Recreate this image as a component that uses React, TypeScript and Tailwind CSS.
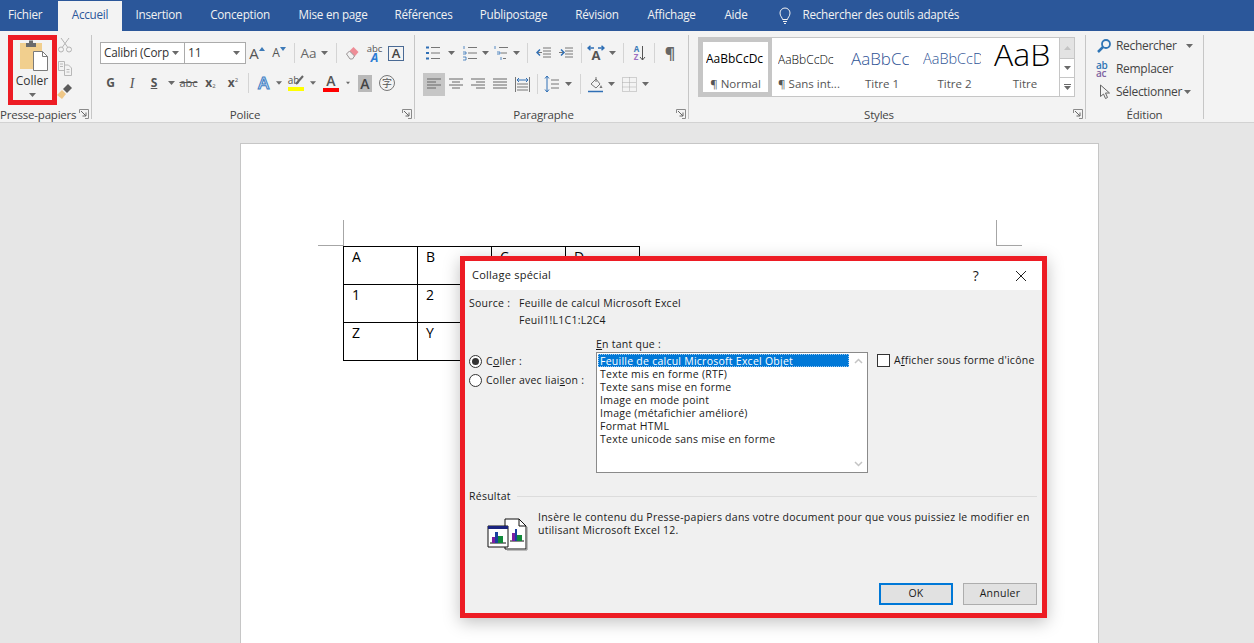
import type { ReactNode } from 'react';

const uiFont = { fontFamily: '"Open Sans", "Noto Sans", sans-serif' };

function Caret({ className = 'text-[#6a6a6a]' }: { className?: string }) {
  return (
    <svg width="7" height="4" viewBox="0 0 7 4" className={className}>
      <path d="M0 0h7L3.5 4z" fill="currentColor" />
    </svg>
  );
}

function Launcher() {
  return (
    <svg width="10" height="10" viewBox="0 0 10 10" className="absolute right-[2px] top-[1px]">
      <path d="M.5 4V.5H9.500V9.500H6" fill="none" stroke="#8a8a8a" />
      <path d="M2 2l5 5M7 3.500V7H3.500" fill="none" stroke="#666" />
    </svg>
  );
}

function VSep() {
  return <div className="h-[20px] w-px bg-[#d4d4d4]" />;
}

function Cell({ className, children }: { className: string; children?: ReactNode }) {
  return <div className={`flex h-[22px] shrink-0 items-center justify-center ${className}`}>{children}</div>;
}

function Lines({ kind }: { kind: 'left' | 'center' | 'right' | 'full' }) {
  const d = {
    left: 'M1 3h14M1 6h9M1 9h14M1 12h9',
    center: 'M1 3h14M4 6h8M1 9h14M4 12h8',
    right: 'M1 3h14M6 6h9M1 9h14M6 12h9',
    full: 'M1 3h14M1 6h14M1 9h14M1 12h14',
  }[kind];
  return (
    <svg width="16" height="16" viewBox="0 0 16 16">
      <path d={d} stroke="#666" fill="none" />
    </svg>
  );
}

function Group({ label, className, labelClass = '', launcher, children }: { label: string; className: string; labelClass?: string; launcher?: boolean; children: ReactNode }) {
  return (
    <div className={`flex h-[84px] shrink-0 flex-col border-r border-[#c6c6c6] ${className}`}>
      <div className="h-[73px] shrink-0">{children}</div>
      <div className={`relative h-[11px] text-center text-[11.5px] leading-[13px] tracking-[-0.2px] text-[#444] ${labelClass}`}>
        {label}
        {launcher && <Launcher />}
      </div>
    </div>
  );
}

const tabs: [string, string][] = [
  ['Insertion', 'w-[73.5px]'],
  ['Conception', 'w-[89px]'],
  ['Mise en page', 'w-[97px]'],
  ['Références', 'w-[84px]'],
  ['Publipostage', 'w-[96px]'],
  ['Révision', 'w-[71px]'],
  ['Affichage', 'w-[78px]'],
  ['Aide', 'w-[51px]'],
];

function TabBar() {
  return (
    <div className="flex h-[31px] items-end bg-[#2b579a] text-[11.7px] tracking-[-0.25px] text-[#f2f2f2]">
      <div className="flex h-[30px] w-[58px] items-center pl-2 pb-[2px]">Fichier</div>
      <div className="flex h-[30px] w-[64px] items-center justify-center bg-[#f3f3f3] pb-[2px] text-[#2b579a]">Accueil</div>
      {tabs.map(([name, width]) => (
        <div key={name} className={`flex h-[30px] items-center justify-center pb-[2px] ${width}`}>
          {name}
        </div>
      ))}
      <div className="ml-[15px] flex h-[30px] items-center pb-[2px]">
        <svg width="16" height="18" viewBox="0 0 16 18" fill="none" stroke="#f2f2f2">
          <path d="M5.500 13.500c0-2-2.500-3-2.500-6.500a5 5 0 0 1 10 0c0 3.500-2.500 4.500-2.500 6.500zM6 15.500h4M7 17.500h2" />
        </svg>
        <span className="ml-[10px]">Rechercher des outils adaptés</span>
      </div>
    </div>
  );
}

function ClipboardGroup() {
  return (
    <Group label="Presse-papiers" className="w-[92px]" labelClass="pr-[20px] whitespace-nowrap" launcher>
      <div className="flex pl-[11px] pt-[4px]">
        <div className="flex w-[42px] flex-col items-center">
          <svg width="30" height="33" viewBox="0 0 30 33" className="ml-[3px]">
            <path d="M1 4h22v26H1z" fill="#f1cf8e" />
            <path d="M7 8V4h3V1.500h4V4h3v4z" fill="#6b6b6b" />
            <path d="M14.500 12.500h9l5 5v14h-14z" fill="#fff" stroke="#7a7a7a" />
            <path d="M23.500 12.500v5h5" fill="none" stroke="#7a7a7a" />
          </svg>
          <span className="mt-[2px] text-[12px] leading-[14px] text-[#333]">Coller</span>
          <div className="mt-[5px]">
            <Caret />
          </div>
        </div>
        <div className="-mt-[2px] ml-[4px] flex flex-col items-center gap-[7px]">
          <svg width="16" height="16" viewBox="0 0 16 16" fill="none" stroke="#b3b3b3">
            <path d="M4 1l6.500 9M12 1L5.500 10" />
            <circle cx="4" cy="12.500" r="2.500" />
            <circle cx="12" cy="12.500" r="2.500" />
          </svg>
          <svg width="16" height="16" viewBox="0 0 16 16" fill="none" stroke="#b8b8b8">
            <path d="M1.500 1.500h6v9h-6zM3 4h3M3 6.500h3" />
            <path d="M7.500 5h4l3 3v7.500h-7zM9.500 9.500h3M9.500 12h3" fill="#f3f3f3" />
          </svg>
          <svg width="16" height="16" viewBox="0 0 16 16">
            <path d="M0 12l5-5 4 4-4 5z" fill="#efc787" />
            <path d="M6 6l5-5 4 4-5 5z" fill="#5c5c5c" />
          </svg>
        </div>
      </div>
    </Group>
  );
}

function FontGroup() {
  return (
    <Group label="Police" className="w-[323px]" labelClass="pr-[16px]" launcher>
      <div className="pt-[7px]">
        <div className="flex h-[22px] items-center pl-2">
          <div className="flex h-[22px] w-[85px] shrink-0 items-center justify-between whitespace-nowrap border border-[#ababab] bg-white pl-[3px] pr-[5px] text-[11.7px] tracking-[-0.2px] text-[#333]">
            Calibri (Corp
            <Caret />
          </div>
          <div className="-ml-px flex h-[22px] w-[62px] shrink-0 items-center justify-between border border-[#ababab] bg-white pl-[3px] pr-[5px] text-[12px] text-[#333]">
            11
            <Caret />
          </div>
          <Cell className="w-[22px] text-[15px] text-[#555]">
            A<svg width="6" height="4" viewBox="0 0 6 4" className="-mt-2"><path d="M0 4l3-4 3 4z" fill="#3d7ab8" /></svg>
          </Cell>
          <Cell className="w-[22px] text-[12px] text-[#555]">
            A<svg width="6" height="4" viewBox="0 0 6 4" className="-mt-2"><path d="M0 0h6L3 4z" fill="#3d7ab8" /></svg>
          </Cell>
          <Cell className="w-[8px]"><VSep /></Cell>
          <Cell className="w-[32px] gap-[4px] text-[13.500px] text-[#666]">
            Aa
            <Caret />
          </Cell>
          <Cell className="w-[12px]"><VSep /></Cell>
          <Cell className="w-[22px]">
            <svg width="16" height="16" viewBox="0 0 16 16">
              <path d="M1.500 9l7-7 5 5-6 7H5z" fill="#ee8d97" />
              <path d="M1.500 9l3-3 5 5-2 3H5z" fill="#f2f2f2" stroke="#999" />
            </svg>
          </Cell>
          <Cell className="w-[21px]">
            <div className="relative flex h-[18px] w-[18px] flex-col items-center leading-none">
              <span className="text-[9.500px] leading-[9px] text-[#555]">abc</span>
              <span className="text-[12px] font-bold italic leading-[10px] text-[#2b7cd3]">A</span>
            </div>
          </Cell>
          <Cell className="w-[22px]">
            <div className="flex h-[15px] w-[16px] items-center justify-center border border-[#4a6a94] text-[13px] font-semibold leading-none text-[#444]">A</div>
          </Cell>
        </div>
        <div className="mt-2 flex h-[22px] items-center pl-2 text-[#555]">
          <Cell className="w-[21px] text-[12px] font-bold">G</Cell>
          <Cell className="w-[22px] font-['Liberation_Serif',serif] text-[14px] italic">I</Cell>
          <Cell className="w-[22px] text-[12px] font-bold underline">S</Cell>
          <Cell className="w-[12px]"><Caret /></Cell>
          <Cell className="w-[23px] text-[11px] line-through">abc</Cell>
          <Cell className="w-[21px] text-[12px] font-bold">x<span className="mt-[6px] text-[6px] font-normal">2</span></Cell>
          <Cell className="w-[24px] text-[12px] font-bold">x<span className="-mt-[6px] text-[6px] font-normal">2</span></Cell>
          <Cell className="w-[6px]"><VSep /></Cell>
          <Cell className="w-[25px] text-[17px] font-semibold text-[#cfe2f6] [-webkit-text-stroke:1px_#3f7fc4]">A</Cell>
          <Cell className="w-[6px]"><Caret /></Cell>
          <Cell className="w-[28px]">
            <div className="relative flex flex-col items-center">
              <span className="-ml-[5px] text-[10px] leading-[11px] text-[#555]">ab</span>
              <svg width="9" height="10" viewBox="0 0 9 10" className="absolute right-[0px] top-0">
                <path d="M1 9l7-8" stroke="#666" strokeWidth="2" />
              </svg>
              <span className="mt-[1px] h-[4px] w-[16px] bg-[#ffff00]" />
            </div>
          </Cell>
          <Cell className="w-[6px]"><Caret /></Cell>
          <Cell className="w-[30px]">
            <div className="flex flex-col items-center">
              <span className="text-[14px] font-semibold leading-[14px] text-[#555]">A</span>
              <span className="h-[4px] w-[16px] bg-[#ff0000]" />
            </div>
          </Cell>
          <Cell className="w-[4px]"><Caret /></Cell>
          <Cell className="w-[30px]">
            <div className="flex h-[17px] w-[14px] items-center justify-center bg-[#b9b9b9] text-[14px] font-semibold text-[#444]">A</div>
          </Cell>
          <Cell className="w-[14px]">
            <div className="flex h-[16px] w-[16px] shrink-0 items-center justify-center rounded-full border border-[#777] font-['Noto_Sans_CJK_SC',sans-serif] text-[10px] leading-none">字</div>
          </Cell>
        </div>
      </div>
    </Group>
  );
}

function ListIcon({ kind }: { kind: 'bullet' | 'num' | 'multi' }) {
  return (
    <svg width="16" height="16" viewBox="0 0 16 16" fill="none" stroke="#777">
      <path d={kind === 'multi' ? 'M6 2.500h9M8 8h6M10 13.500h3' : 'M6 2.500h9M6 8h9M6 13.500h9'} />
      {kind === 'bullet' && <path d="M1 1.500h3v2H1zM1 7h3v2H1zM1 12.500h3v2H1z" fill="#2f6fb5" stroke="none" />}
      {kind === 'num' && <path d="M2 1v3M1 7h3v2H1M1 12h3v3H1" stroke="#2f6fb5" strokeWidth=".8" />}
      {kind === 'multi' && <path d="M2 1v3M4 7h3v2H4M8 12v3" stroke="#2f6fb5" strokeWidth=".8" />}
    </svg>
  );
}

function ParagraphGroup() {
  return (
    <Group label="Paragraphe" className="w-[274px]" labelClass="pr-[16px]" launcher>
      <div className="pt-[7px]">
        <div className="flex h-[22px] items-center pl-[8px]">
          <Cell className="w-[20px]"><ListIcon kind="bullet" /></Cell>
          <Cell className="w-[17px]"><Caret /></Cell>
          <Cell className="w-[20px]"><ListIcon kind="num" /></Cell>
          <Cell className="w-[10px]"><Caret /></Cell>
          <Cell className="w-[22px]"><ListIcon kind="multi" /></Cell>
          <Cell className="w-[8px]"><Caret /></Cell>
          <Cell className="w-[14px]"><VSep /></Cell>
          <Cell className="w-[20px]">
            <svg width="16" height="16" viewBox="0 0 16 16" fill="none" stroke="#777">
              <path d="M7 3h8M7 6h8M7 9h8M7 12h8M1 7.500h5" />
              <path d="M4 4.500L1 7.500l3 3" stroke="#2f6fb5" strokeWidth="1.500" />
            </svg>
          </Cell>
          <Cell className="w-[24px]">
            <svg width="16" height="16" viewBox="0 0 16 16" fill="none" stroke="#777">
              <path d="M7 3h8M7 6h8M7 9h8M7 12h8M1 7.500h5" />
              <path d="M3 4.500l3 3-3 3" stroke="#2f6fb5" strokeWidth="1.500" />
            </svg>
          </Cell>
          <Cell className="w-[6px]"><VSep /></Cell>
          <Cell className="w-[24px]">
            <div className="flex flex-col items-center">
              <svg width="18" height="6" viewBox="0 0 18 6" fill="none" stroke="#2f6fb5" strokeWidth="1.500">
                <path d="M7 3H1M3.500.8L1 3l2.500 2.200M11 3h6M14.500.8L17 3l-2.500 2.200" />
              </svg>
              <span className="-mt-[2px] text-[13px] font-bold leading-[12px] text-[#555]">A</span>
            </div>
          </Cell>
          <Cell className="w-[8px]"><Caret /></Cell>
          <Cell className="w-[14px]"><VSep /></Cell>
          <Cell className="w-[20px]">
            <div className="flex flex-col text-[8px] font-bold leading-[8px] text-[#3d7ab8]"><span>A</span><span className="text-[#9b6fc0]">Z</span></div>
            <svg width="7" height="16" viewBox="0 0 7 16" fill="none" stroke="#555"><path d="M3.500 1v14M1 12l2.500 3L6 12" /></svg>
          </Cell>
          <Cell className="w-[8px]"><VSep /></Cell>
          <Cell className="w-[24px] text-[16px] font-bold text-[#666]">¶</Cell>
        </div>
        <div className="mt-2 flex h-[24px] items-center pl-[8px]">
          <Cell className="h-[23px] w-[22px] bg-[#c6c6c6]"><Lines kind="left" /></Cell>
          <Cell className="w-[22px]"><Lines kind="center" /></Cell>
          <Cell className="w-[22px]"><Lines kind="right" /></Cell>
          <Cell className="w-[22px]"><Lines kind="full" /></Cell>
          <Cell className="w-[23px]">
            <svg width="17" height="17" viewBox="0 0 17 17" fill="none" stroke="#777">
              <path d="M1.500 1v15M15.500 1v15M3 8h11M3 11h11M3 14h11" />
              <path d="M3 4h11M5 2L3 4l2 2M12 2l2 2-2 2" stroke="#2f6fb5" />
            </svg>
          </Cell>
          <Cell className="w-[6px]"><VSep /></Cell>
          <Cell className="w-[24px]">
            <svg width="16" height="18" viewBox="0 0 16 18" fill="none" stroke="#777">
              <path d="M7 5h8M7 9h8M7 13h8" />
              <path d="M3 1v16M1 3.500L3 1l2 2.500M1 14.500L3 17l2-2.500" stroke="#2f6fb5" />
            </svg>
          </Cell>
          <Cell className="w-[8px]"><Caret /></Cell>
          <Cell className="w-[16px]"><VSep /></Cell>
          <Cell className="w-[14px]">
            <svg width="17" height="17" viewBox="0 0 17 17" fill="none" stroke="#777" className="shrink-0">
              <path d="M4 8l5-5 4 5-4 4z" />
              <path d="M9 1v5" />
              <path d="M14 9l1.500 3h-3z" fill="#777" stroke="none" />
              <path d="M1 15.500h15" stroke="#2f6fb5" strokeWidth="1.500" />
            </svg>
          </Cell>
          <Cell className="w-[18px]"><Caret /></Cell>
          <Cell className="w-[18px]">
            <svg width="15" height="15" viewBox="0 0 15 15" fill="none" stroke="#aaa" strokeDasharray="1 1" className="shrink-0">
              <path d="M.5.5h14v14H.5zM7.500.5v14M.5 5.500h14M.5 10h14" />
            </svg>
          </Cell>
          <Cell className="w-[14px]"><Caret /></Cell>
        </div>
      </div>
    </Group>
  );
}

const styleCells = [
  { sample: 'AaBbCcDc', label: '¶ Sans int...', cls: 'w-[74px]', text: 'w-[60px] ml-[6px] text-[12px] text-black pt-[13px]' },
  { sample: 'AaBbCcDc', label: 'Titre 1', cls: 'w-[72px]', text: 'w-[58px] ml-[5px] text-[17px] text-[#2f5496] pt-[12px]' },
  { sample: 'AaBbCcDd', label: 'Titre 2', cls: 'w-[73px]', text: 'w-[58px] ml-[5px] text-[14.5px] text-[#2f5496] pt-[12px]' },
];

function StylesGroup() {
  return (
    <Group label="Styles" className="w-[397px]" labelClass="pr-[16px]" launcher>
      <div className="flex pl-[9px] pt-[2px]">
        <div className="flex h-[60px] border border-[#c6c6c6] bg-white">
          <div className="flex w-[73px] flex-col border-[4px] border-[#c6c6c6]">
            <div className="ml-[3px] h-[34px] w-[59px] overflow-hidden whitespace-nowrap pt-[9px] text-[12px] leading-[16px] text-black">AaBbCcDc</div>
            <div className="text-center text-[11.500px] leading-[15px] text-[#555]">¶ Normal</div>
          </div>
          {styleCells.map(c => (
            <div key={c.label} className={`flex flex-col ${c.cls}`}>
              <div className={`h-[38px] overflow-hidden whitespace-nowrap font-light leading-[18px] ${c.text}`}>{c.sample}</div>
              <div className="text-center text-[11.500px] leading-[15px] text-[#555]">{c.label}</div>
            </div>
          ))}
          <div className="flex w-[68px] flex-col">
            <div className="h-[38px] pt-[7px]">
              <div className="h-[24px] overflow-hidden pl-[3px] text-[32px] font-light leading-[18px] text-black">AaB</div>
            </div>
            <div className="text-center text-[11.500px] leading-[15px] text-[#555]">Titre</div>
          </div>
        </div>
        <div className="flex h-[60px] w-[15px] flex-col border border-l-0 border-[#c6c6c6] bg-white">
          <div className="flex h-[21px] items-center justify-center border-b border-[#c6c6c6] bg-[#e3e3e3]"><Caret className="rotate-180 text-[#c4c4c4]" /></div>
          <div className="flex h-[19px] items-center justify-center border-b border-[#c6c6c6]"><Caret /></div>
          <div className="flex flex-1 flex-col items-center justify-center gap-[1px]">
            <span className="h-px w-[7px] bg-[#6a6a6a]" />
            <Caret />
          </div>
        </div>
      </div>
    </Group>
  );
}

function EditGroup() {
  return (
    <Group label="Édition" className="w-[118px]">
      <div className="-mt-px flex flex-col pl-[10px] text-[12px] leading-[23px] tracking-[-0.3px] text-[#444]">
        <div className="flex h-[23px] items-center">
          <svg width="16" height="16" viewBox="0 0 16 16" fill="none" stroke="#2f75b5" strokeWidth="1.800">
            <circle cx="10" cy="6" r="4" />
            <path d="M7 9l-5 5" strokeWidth="2.500" />
          </svg>
          <span className="ml-[4px]">Rechercher</span>
          <span className="ml-[9px]"><Caret /></span>
        </div>
        <div className="flex h-[23px] items-center">
          <div className="flex w-[16px] flex-col text-[10px] font-semibold leading-[8px]">
            <span className="text-[#2f75b5]">ab</span>
            <span className="text-[#8064a2]">ac</span>
          </div>
          <span className="ml-[4px]">Remplacer</span>
        </div>
        <div className="flex h-[23px] items-center">
          <svg width="16" height="16" viewBox="0 0 16 16" fill="#f3f3f3" stroke="#666">
            <path d="M4.500 1v11.500l3-2.500 2 4.500 2-1-2-4.500h4z" />
          </svg>
          <span className="ml-[4px]">Sélectionner</span>
          <span className="ml-[2px]"><Caret /></span>
        </div>
      </div>
    </Group>
  );
}

function CropMark({ side }: { side: 'left' | 'right' }) {
  return (
    <div className={`h-[26px] w-[26px] border-b border-[#a6a6a6] ${side === 'left' ? 'border-r' : 'border-l'}`} />
  );
}

const tableRows = [
  ['A', 'B', 'C', 'D'],
  ['1', '2', '', ''],
  ['Z', 'Y', '', ''],
];

function PageArea() {
  return (
    <div className="h-[520px] bg-[#e6e6e6] pl-[240px] pt-[20px]">
      <div className="h-[500px] w-[859px] border border-b-0 border-[#c6c6c6] bg-white pl-[77px] pt-[76px]">
        <div className="flex w-[704px] justify-between">
          <CropMark side="left" />
          <CropMark side="right" />
        </div>
        <table className="ml-[25px] w-[297px] table-fixed border-collapse text-[14px] text-black">
          <tbody>
            {tableRows.map(row => (
              <tr key={row[0]} className="h-[38px]">
                {row.map((c, i) => (
                  <td key={i} className="w-[74px] border border-black pl-[8px] align-top leading-[19px]">
                    {c}
                  </td>
                ))}
              </tr>
            ))}
          </tbody>
        </table>
      </div>
    </div>
  );
}

function Radio({ checked }: { checked?: boolean }) {
  return (
    <span className="flex h-[13px] w-[13px] shrink-0 items-center justify-center rounded-full border border-[#333] bg-white">
      {checked && <span className="h-[7px] w-[7px] rounded-full bg-[#333]" />}
    </span>
  );
}

const formats = [
  'Texte mis en forme (RTF)',
  'Texte sans mise en forme',
  'Image en mode point',
  'Image (métafichier amélioré)',
  'Format HTML',
  'Texte unicode sans mise en forme',
];

function ResultIcon() {
  return (
    <svg width="42" height="34" viewBox="0 0 42 34" className="mt-[6px] shrink-0">
      <path d="M18 2h14l7 7v23H18z" fill="#fff" stroke="#111" />
      <path d="M32 2v7h7" fill="none" stroke="#111" />
      <path d="M40 10v23H20" fill="none" stroke="#888" />
      <path d="M23 24h14" stroke="#111" />
      <path d="M25 16h3v8h-3z" fill="#7b1fa2" />
      <path d="M28 12h2v12h-2z" fill="#1a3fa0" />
      <path d="M30 18h5v6h-5z" fill="#118a3b" />
      <path d="M1 9h20v21H1z" fill="#fff" stroke="#111" />
      <path d="M1 9h20v3H1z" fill="#1a237e" />
      <path d="M3 26h16" stroke="#111" />
      <path d="M5 20h3v6H5z" fill="#7b1fa2" />
      <path d="M8 15h3v11H8z" fill="#1a3fa0" />
      <path d="M11 19h5v7h-5z" fill="#118a3b" />
    </svg>
  );
}

function PasteDialog() {
  return (
    <div className="absolute left-[460px] top-[256px] flex h-[362px] w-[587px] flex-col border-[5px] border-[#ed1c24] bg-[#f0f0f0] text-[10.500px] tracking-[0.25px] text-[#1a1a1a] shadow-[0_4px_16px_rgba(0,0,0,0.25)]">
      <div className="flex h-[29px] shrink-0 items-center bg-white pl-[7px] text-[11px]">
        <span>Collage spécial</span>
        <span className="ml-auto text-[14px]">?</span>
        <svg width="12" height="12" viewBox="0 0 12 12" className="ml-[36px] mr-[15px]" stroke="#222" fill="none">
          <path d="M1 1l10 10M11 1L1 11" />
        </svg>
      </div>
      <div className="flex flex-1 flex-col pl-[4px] pr-[5px]">
        <div className="mt-[5px] flex leading-[17px]">
          <div className="w-[50px]">Source :</div>
          <div>
            Feuille de calcul Microsoft Excel
            <br />
            Feuil1!L1C1:L2C4
          </div>
        </div>
        <div className="mt-[7px] flex">
          <div className="w-[127px] pt-[16px]">
            <div className="flex h-[19px] items-center gap-[4px]">
              <Radio checked />
              <span>C<u>o</u>ller :</span>
            </div>
            <div className="flex h-[19px] items-center gap-[4px]">
              <Radio />
              <span>Coller avec liai<u>s</u>on :</span>
            </div>
          </div>
          <div className="w-[272px]">
            <div className="h-[16px] leading-[16px]"><u>E</u>n tant que :</div>
            <div className="flex h-[121px] border border-[#8a8a8a] bg-white">
              <div className="min-w-0 flex-1 pl-[1px] pt-[1px] leading-[15px]">
                <div className="h-[13px] whitespace-nowrap bg-[#0078d7] pl-[2px] text-white outline-1 -outline-offset-1 outline-dotted outline-[#9cc9ef]">
                  Feuille de calcul Microsoft Excel Objet
                </div>
                {formats.map(f => (
                  <div key={f} className="h-[13px] whitespace-nowrap pl-[2px]">{f}</div>
                ))}
              </div>
              <div className="flex w-[18px] flex-col items-center justify-between py-[5px]">
                <svg width="9" height="6" viewBox="0 0 9 6" fill="none" stroke="#c4c4c4" strokeWidth="1.500"><path d="M1 5l3.500-3.500L8 5" /></svg>
                <svg width="9" height="6" viewBox="0 0 9 6" fill="none" stroke="#c4c4c4" strokeWidth="1.500"><path d="M1 1l3.500 3.500L8 1" /></svg>
              </div>
            </div>
          </div>
          <div className="ml-[9px] mt-[18px] flex h-[13px] items-center">
            <span className="h-[13px] w-[13px] shrink-0 border border-[#333] bg-white" />
            <span className="ml-[4px] whitespace-nowrap">A<u>f</u>ficher sous forme d'icône</span>
          </div>
        </div>
        <div className="mt-[16px] flex items-center">
          <span className="text-[10.500px]">Résultat</span>
          <span className="ml-[6px] h-px flex-1 bg-[#dcdcdc]" />
        </div>
        <div className="mt-[6px] flex pl-[18px]">
          <ResultIcon />
          <p className="ml-[9px] w-[500px] leading-[13px]">
            Insère le contenu du Presse-papiers dans votre document pour que vous puissiez le modifier en utilisant Microsoft Excel 12.
          </p>
        </div>
        <div className="mt-auto flex justify-end gap-[10px] pb-[8px]">
          <div className="flex h-[22px] w-[74px] items-center justify-center border-2 border-[#0078d7] bg-[#e1e1e1]">OK</div>
          <div className="flex h-[22px] w-[74px] items-center justify-center border border-[#adadad] bg-[#e1e1e1]">Annuler</div>
        </div>
      </div>
    </div>
  );
}

export default function App() {
  return (
    <div className="relative h-[643px] w-[1254px] overflow-hidden bg-[#e6e6e6]" style={uiFont}>
      <TabBar />
      <div className="flex h-[92px] border-b border-[#d2d2d2] bg-[#f3f3f3] pt-1">
        <ClipboardGroup />
        <FontGroup />
        <ParagraphGroup />
        <StylesGroup />
        <EditGroup />
      </div>
      <PageArea />
      <div className="absolute left-[8px] top-[35px] h-[70px] w-[49px] border-[5px] border-[#ed1c24]" />
      <PasteDialog />
    </div>
  );
}
